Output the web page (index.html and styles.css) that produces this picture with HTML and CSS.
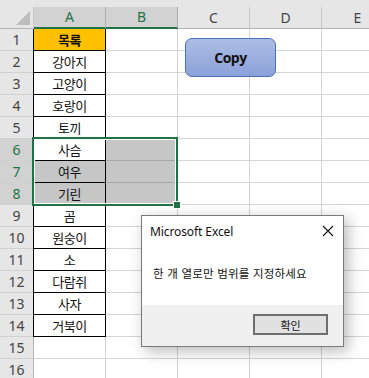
FILE: index.html
```html
<!DOCTYPE html>
<html lang="ko">

<head>
    <meta charset="UTF-8">
    <meta name="viewport" content="width=device-width, initial-scale=1.0">
    <title>Excel - 열 선택</title>
    <link rel="stylesheet" href="styles.css">
</head>

<body>
    <div class="sheet">
        <div class="band"></div>

        <div class="row head">
            <div class="corner"><span class="tri"></span></div>
            <div class="col sel">A</div>
            <div class="col sel">B</div>
            <div class="col">C</div>
            <div class="col">D</div>
            <div class="col">E</div>
        </div>

        <div class="row"><div class="num">1</div><div class="cell list title">목록</div><div class="cell"></div><div class="cell"></div><div class="cell"></div><div class="cell"></div></div>
        <div class="row"><div class="num">2</div><div class="cell list">강아지</div><div class="cell"></div><div class="cell"></div><div class="cell"></div><div class="cell"></div></div>
        <div class="row"><div class="num">3</div><div class="cell list">고양이</div><div class="cell"></div><div class="cell"></div><div class="cell"></div><div class="cell"></div></div>
        <div class="row"><div class="num">4</div><div class="cell list">호랑이</div><div class="cell"></div><div class="cell"></div><div class="cell"></div><div class="cell"></div></div>
        <div class="row"><div class="num">5</div><div class="cell list">토끼</div><div class="cell"></div><div class="cell"></div><div class="cell"></div><div class="cell"></div></div>
        <div class="row"><div class="num sel">6</div><div class="cell list">사슴</div><div class="cell shade"></div><div class="cell"></div><div class="cell"></div><div class="cell"></div></div>
        <div class="row"><div class="num sel">7</div><div class="cell list shade">여우</div><div class="cell shade"></div><div class="cell"></div><div class="cell"></div><div class="cell"></div></div>
        <div class="row"><div class="num sel">8</div><div class="cell list shade">기린</div><div class="cell shade"></div><div class="cell"></div><div class="cell"></div><div class="cell"></div></div>
        <div class="row"><div class="num">9</div><div class="cell list">곰</div><div class="cell"></div><div class="cell"></div><div class="cell"></div><div class="cell"></div></div>
        <div class="row"><div class="num">10</div><div class="cell list">원숭이</div><div class="cell"></div><div class="cell"></div><div class="cell"></div><div class="cell"></div></div>
        <div class="row"><div class="num">11</div><div class="cell list">소</div><div class="cell"></div><div class="cell"></div><div class="cell"></div><div class="cell"></div></div>
        <div class="row"><div class="num">12</div><div class="cell list">다람쥐</div><div class="cell"></div><div class="cell"></div><div class="cell"></div><div class="cell"></div></div>
        <div class="row"><div class="num">13</div><div class="cell list">사자</div><div class="cell"></div><div class="cell"></div><div class="cell"></div><div class="cell"></div></div>
        <div class="row"><div class="num">14</div><div class="cell list">거북이</div><div class="cell"></div><div class="cell"></div><div class="cell"></div><div class="cell"></div></div>
        <div class="row"><div class="num">15</div><div class="cell"></div><div class="cell"></div><div class="cell"></div><div class="cell"></div><div class="cell"></div></div>
        <div class="row"><div class="num">16</div><div class="cell"></div><div class="cell"></div><div class="cell"></div><div class="cell"></div><div class="cell"></div></div>

        <!-- A6:B8 selection -->
        <div class="selection"><span class="handle"></span></div>

        <button class="copy-btn">Copy</button>

        <div class="dialog">
            <div class="dialog-title">
                <span>Microsoft Excel</span>
                <svg class="close" width="12" height="12" viewBox="0 0 12 12">
                    <path d="M1 1 L11 11 M11 1 L1 11" stroke="#111" stroke-width="1.1" fill="none" />
                </svg>
            </div>
            <div class="dialog-body">한 개 열로만 범위를 지정하세요</div>
            <div class="dialog-foot">
                <button class="ok-btn">확인</button>
            </div>
        </div>
    </div>
</body>

</html>
```

FILE: styles.css
```css
body {
    margin: 0;
    padding: 0;
    background-color: #ffffff;
    overflow: hidden;
    font-family: 'Noto Sans', 'Noto Sans CJK KR', sans-serif;
}

.sheet {
    position: relative;
    width: 369px;
    height: 378px;
    overflow: hidden;
}

.band {
    height: 7px;
    background-color: #e6e6e6;
}

.row {
    display: grid;
    grid-template-columns: 34px 72px 72px 72px 72px 72px;
    height: 22px;
}

.row > div {
    box-sizing: border-box;
    display: flex;
    align-items: center;
    justify-content: center;
}

.corner {
    position: relative;
    background-color: #e6e6e6;
    border-right: 1px solid #c8c8c8;
    border-bottom: 1px solid #b4b4b4;
}

.tri {
    position: absolute;
    right: 3px;
    bottom: 3px;
    width: 0;
    height: 0;
    border-left: 14px solid transparent;
    border-bottom: 14px solid #bdbdbd;
}

.col {
    background-color: #e6e6e6;
    border-right: 1px solid #c8c8c8;
    border-bottom: 1px solid #b4b4b4;
    color: #444;
    font-size: 14px;
    padding-bottom: 1px;
}

.col.sel {
    background-color: #d2d2d2;
    color: #217346;
    border-right-color: #b0b0b0;
    border-bottom: 2px solid #217346;
}

.num {
    background-color: #e6e6e6;
    border-right: 1px solid #b4b4b4;
    border-bottom: 1px solid #d0d0d0;
    color: #444;
    font-size: 14px;
}

.num.sel {
    background-color: #d2d2d2;
    color: #217346;
}

.cell {
    border-right: 1px solid #d4d4d4;
    border-bottom: 1px solid #d4d4d4;
    font-family: 'Noto Sans CJK KR', sans-serif;
    font-size: 13px;
    letter-spacing: -0.5px;
    color: #111;
}

.cell.list {
    border-right-color: #000;
    border-bottom-color: #000;
    box-shadow: -1px 0 0 #000;
}

.cell.title {
    background-color: #ffc000;
    font-weight: bold;
}

.cell.shade {
    background-color: #c6c6c6;
}

.cell.shade:not(.list) {
    border-bottom-color: #a8a8a8;
}

.selection {
    position: absolute;
    left: 32px;
    top: 137px;
    width: 146px;
    height: 69px;
    box-sizing: border-box;
    border: 2px solid #217346;
    box-shadow: inset 0 0 0 1px #ffffff;
}

.handle {
    position: absolute;
    right: -5px;
    bottom: -5px;
    width: 6px;
    height: 6px;
    background-color: #217346;
    border: 1px solid #ffffff;
}

.copy-btn {
    position: absolute;
    left: 185px;
    top: 38px;
    width: 91px;
    height: 39px;
    border: 1px solid #4a6fbd;
    border-radius: 7px;
    background: linear-gradient(#adbde5, #8ba1d9);
    font-family: 'Open Sans', sans-serif;
    font-weight: bold;
    font-size: 14px;
    letter-spacing: -0.5px;
    color: #111;
    padding: 0;
}

.dialog {
    position: absolute;
    left: 141px;
    top: 215px;
    width: 203px;
    height: 132px;
    box-sizing: border-box;
    border: 1px solid #7a7a7a;
    background-color: #ffffff;
    box-shadow: 4px 4px 14px rgba(0, 0, 0, 0.28);
    display: flex;
    flex-direction: column;
}

.dialog-title {
    display: flex;
    justify-content: space-between;
    align-items: center;
    height: 30px;
    padding: 0 9px 0 8px;
    font-family: 'Noto Sans', sans-serif;
    font-size: 12px;
    letter-spacing: -0.1px;
    color: #111;
}

.dialog-body {
    flex: 1;
    padding: 19px 0 0 11px;
    font-family: 'Noto Sans CJK KR', sans-serif;
    font-size: 11.5px;
    letter-spacing: 0.2px;
    color: #111;
}

.dialog-foot {
    height: 41px;
    background-color: #f0f0f0;
    display: flex;
    justify-content: flex-end;
    align-items: flex-start;
    padding: 9px 15px 0 0;
    box-sizing: border-box;
}

.ok-btn {
    width: 75px;
    height: 21px;
    box-sizing: border-box;
    border: 2px solid #6e6e6e;
    background-color: #e1e1e1;
    font-family: 'Noto Sans CJK KR', sans-serif;
    font-size: 11px;
    color: #111;
    padding: 0;
}
```
